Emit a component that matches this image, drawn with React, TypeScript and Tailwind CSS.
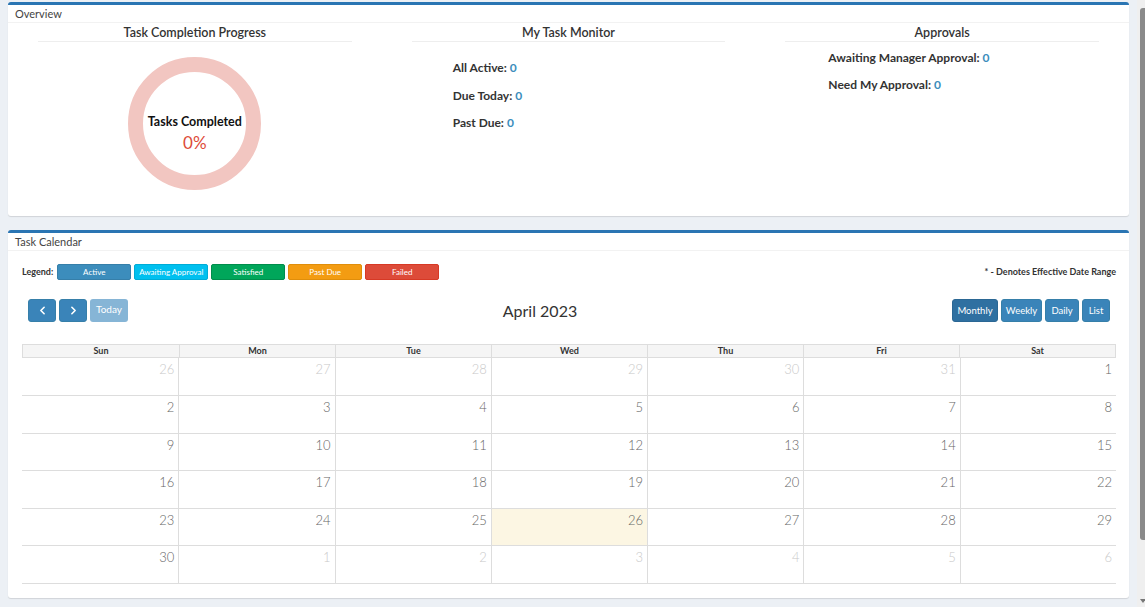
import React from "react";
import { ChevronLeft, ChevronRight } from "lucide-react";

const FONT = "font-['Lato','Liberation_Sans',sans-serif]";

function Box({ title, children, className = "" }: { title: string; children: React.ReactNode; className?: string }) {
  return (
    <div className={`bg-white border-t-[3px] border-[#2a75b3] rounded-[3px] shadow-[0_1px_1px_rgba(0,0,0,0.12)] flex flex-col ${className}`}>
      <div className="h-[18px] px-[7px] text-[11px] leading-[17px] text-[#444] border-b border-[#f2f2f2]">{title}</div>
      {children}
    </div>
  );
}

function Stat({ label }: { label: string }) {
  return (
    <div className="text-[12px] leading-[16px] font-bold text-[#333]">
      {label} <span className="text-[#3c8dbc]">0</span>
    </div>
  );
}

function ColTitle({ children }: { children: React.ReactNode }) {
  return (
    <div className="pt-[2px]">
      <div className="text-center text-[12.5px] leading-[16px] font-semibold text-[#333]">{children}</div>
      <div className="mx-[30px] border-t border-[#eeeeee]" />
    </div>
  );
}

const legend = [
  { label: "Active", cls: "bg-[#3c8dbc] border-[#367fa9]" },
  { label: "Awaiting Approval", cls: "bg-[#00c0ef] border-[#00acd6]" },
  { label: "Satisfied", cls: "bg-[#00a65a] border-[#008d4c]" },
  { label: "Past Due", cls: "bg-[#f39c12] border-[#e08e0b]" },
  { label: "Failed", cls: "bg-[#dd4b39] border-[#d73925]" },
];

const days = ["Sun", "Mon", "Tue", "Wed", "Thu", "Fri", "Sat"];

type Cell = { n: number; other?: boolean; today?: boolean };
const weeks: Cell[][] = (() => {
  const res: Cell[][] = [];
  const first: Cell[] = [26, 27, 28, 29, 30, 31].map((n) => ({ n, other: true }));
  first.push({ n: 1 });
  res.push(first);
  let d = 2;
  for (let w = 0; w < 4; w++) {
    const row: Cell[] = [];
    for (let i = 0; i < 7; i++) {
      row.push({ n: d, today: d === 26 });
      d++;
    }
    res.push(row);
  }
  const last: Cell[] = [{ n: 30 }];
  for (let i = 1; i <= 6; i++) last.push({ n: i, other: true });
  res.push(last);
  return res;
})();

const viewBtns = [
  { label: "Monthly", w: "w-[46px]", active: true },
  { label: "Weekly", w: "w-[41px]" },
  { label: "Daily", w: "w-[34px]" },
  { label: "List", w: "w-[28px]" },
];

export default function App() {
  return (
    <div className={`flex h-[607px] w-[1145px] overflow-hidden bg-[#ecf0f5] ${FONT}`}>
      <div className="flex-1 min-w-0 px-2 pt-[2px] flex flex-col gap-[14px]">
        <Box title="Overview" className="h-[214px]">
          <div className="grid grid-cols-3 flex-1">
            <div className="flex flex-col">
              <ColTitle>Task Completion Progress</ColTitle>
              <div className="mt-[15px] flex justify-center">
                <div className="grid">
                  <svg width="133" height="133" viewBox="0 0 133 133" className="col-start-1 row-start-1">
                    <circle cx="66.5" cy="66.5" r="59" fill="none" stroke="#f2c6c1" strokeWidth="15" />
                  </svg>
                  <div className="col-start-1 row-start-1 flex flex-col items-center pt-[57px]">
                    <div className="text-[12.5px] leading-[16px] font-bold text-[#111]">Tasks Completed</div>
                    <div className="mt-[3px] text-[17px] leading-[20px] text-[#dd4b39]">0%</div>
                  </div>
                </div>
              </div>
            </div>
            <div className="flex flex-col">
              <ColTitle>My Task Monitor</ColTitle>
              <div className="pl-[71px] mt-[18px] flex flex-col gap-[11.5px]">
                <Stat label="All Active:" />
                <Stat label="Due Today:" />
                <Stat label="Past Due:" />
              </div>
            </div>
            <div className="flex flex-col">
              <ColTitle>Approvals</ColTitle>
              <div className="pl-[73px] mt-[8px] flex flex-col gap-[11px]">
                <Stat label="Awaiting Manager Approval:" />
                <Stat label="Need My Approval:" />
              </div>
            </div>
          </div>
        </Box>

        <Box title="Task Calendar" className="h-[368px]">
          <div className="pl-[14px] pr-[13px] pt-[13px]">
            <div className="flex items-center h-[16px]">
              <span className="text-[9px] font-bold text-[#333] mr-[4px]">Legend:</span>
              <div className="flex gap-[3px]">
                {legend.map((l) => (
                  <div
                    key={l.label}
                    className={`w-[74px] h-[16px] rounded-[2px] border text-white text-[8px] leading-[14px] text-center ${l.cls}`}
                  >
                    {l.label}
                  </div>
                ))}
              </div>
              <div className="ml-auto text-[9px] font-bold text-[#333]">* - Denotes Effective Date Range</div>
            </div>

            <div className="mt-[19px] px-[6px] flex items-center h-[23px]">
              <div className="flex gap-[3px] items-center">
                <div className="w-[28px] h-[23px] rounded-[3px] bg-[#3a84b9] border border-[#367fa9] flex items-center justify-center">
                  <ChevronLeft size={13} strokeWidth={3} color="white" />
                </div>
                <div className="w-[28px] h-[23px] rounded-[3px] bg-[#3a84b9] border border-[#367fa9] flex items-center justify-center">
                  <ChevronRight size={13} strokeWidth={3} color="white" />
                </div>
                <div className="w-[38px] h-[23px] rounded-[3px] bg-[#86b5d6] text-white text-[10px] leading-[20px] text-center">Today</div>
              </div>
              <div className="flex-1 text-center text-[16px] text-[#333]">April 2023</div>
              <div className="flex gap-[3px]">
                {viewBtns.map((b) => (
                  <div
                    key={b.label}
                    className={`h-[23px] ${b.w} rounded-[3px] border text-white text-[9.5px] leading-[21px] text-center ${
                      b.active ? "bg-[#2f70a1] border-[#2b6794]" : "bg-[#3a84b9] border-[#367fa9]"
                    }`}
                  >
                    {b.label}
                  </div>
                ))}
              </div>
            </div>

            <div className="mt-[22px]">
              <div className="grid grid-cols-7 bg-[#f5f5f5] border border-[#dddddd]">
                {days.map((d, i) => (
                  <div
                    key={d}
                    className={`text-center text-[9px] font-bold text-[#333] leading-[12px] ${i > 0 ? "border-l border-[#dddddd]" : ""}`}
                  >
                    {d}
                  </div>
                ))}
              </div>
              {weeks.map((w, wi) => (
                <div key={wi} className={`grid grid-cols-7 border-b border-[#dddddd] ${wi === 0 ? "h-[38px]" : "h-[37.5px]"}`}>
                  {w.map((c, ci) => (
                    <div
                      key={ci}
                      className={`text-right pr-[4px] pt-[3px] text-[13px] leading-[16px] font-light ${
                        c.other ? "text-[#c9c9c9]" : "text-[#666]"
                      } ${c.today ? "bg-[#fcf6e3]" : ""} ${ci > 0 ? "border-l border-[#dddddd]" : ""}`}
                    >
                      {c.n}
                    </div>
                  ))}
                </div>
              ))}
            </div>
          </div>
        </Box>
      </div>
      <div className="w-[8px] flex flex-col bg-[#efefef]">
        <div className="mt-[8px] ml-[3px] w-[5px] h-[532px] rounded-l-[3px] bg-[#8a8a8a]" />
        <div className="mt-auto mb-[4px] ml-[3px] w-0 h-0 border-l-[3px] border-r-[3px] border-t-[4px] border-l-transparent border-r-transparent border-t-[#777]" />
      </div>
    </div>
  );
}
